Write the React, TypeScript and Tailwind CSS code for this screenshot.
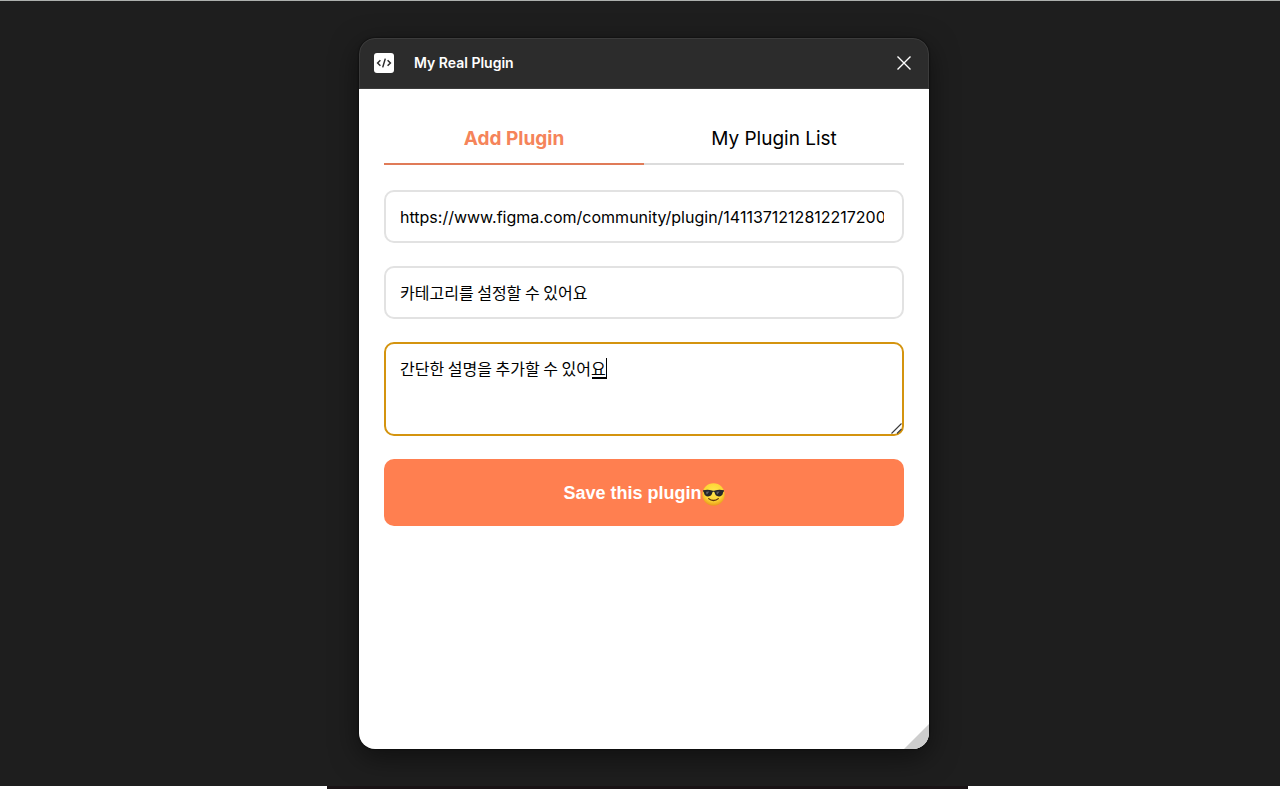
import { useState } from 'react';

type Tab = 'add' | 'list';

const tabs: { id: Tab; label: string }[] = [
    { id: 'add', label: 'Add Plugin' },
    { id: 'list', label: 'My Plugin List' },
];

const fieldStyle =
    'block h-[53px] w-full rounded-[10px] border-2 border-[#e2e2e2] bg-white pl-[14px] text-base text-black outline-none';

const CodeIcon = () => (
    <svg width="20" height="20" viewBox="0 0 20 20" fill="none" aria-hidden="true">
        <rect width="20" height="20" rx="3" fill="#fff" />
        <path
            d="M6.400 7.200 3.600 10l2.800 2.800M13.600 7.200l2.800 2.800-2.800 2.800M11.300 5.600l-2.600 8.800"
            stroke="#2c2c2c"
            strokeWidth="1.500"
        />
    </svg>
);

const CloseIcon = () => (
    <svg width="16" height="16" viewBox="0 0 16 16" fill="none" aria-hidden="true">
        <path d="m1.500 1.500 13 13M14.500 1.500l-13 13" stroke="#fff" strokeWidth="1.400" />
    </svg>
);

const SunglassesFace = () => (
    <svg className="mt-1" width="23" height="23" viewBox="0 0 24 24" fill="none" role="img" aria-label="😎">
        <defs>
            <radialGradient id="face" cx="50%" cy="38%" r="62%">
                <stop offset="0" stopColor="#ffe94f" />
                <stop offset="0.65" stopColor="#fdd535" />
                <stop offset="1" stopColor="#e99a1c" />
            </radialGradient>
        </defs>
        <circle cx="12" cy="12" r="11.7" fill="url(#face)" />
        <path
            d="M1 7.6c3-.9 6.800-.9 9.500.2.900.4 2.100.4 3 0 2.700-1.100 6.500-1.100 9.500-.2l-.3 1.600c-.6.200-.7.700-.9 1.600-.5 2.400-2 3.300-4.300 3.200-2.500-.1-3.700-1.400-4.200-3.500-.2-.9-.5-1.300-1.300-1.300s-1.100.4-1.300 1.300c-.5 2.100-1.700 3.400-4.200 3.500-2.300.1-3.800-.8-4.300-3.200-.2-.9-.3-1.400-.9-1.600L1 7.600Z"
            fill="#26272b"
        />
        <path d="m4.400 9 3.200-.2-2.400 3.300c-.7-.7-.9-2-.8-3.100ZM15.200 9l3.200-.2-2.400 3.300c-.7-.7-.9-2-.8-3.100Z" fill="#62656c" />
        <path d="M7 16.300c2.700 2.600 7.300 2.600 10 0" stroke="#65350c" strokeWidth="1.400" strokeLinecap="round" />
    </svg>
);

const ResizeGrip = () => (
    <svg className="pointer-events-none absolute right-[2px] bottom-[2px]" width="11" height="11" viewBox="0 0 11 11" aria-hidden="true">
        <path d="M.5 10.500l10-10M6 10.500l4.500-4.500" stroke="#3a3a3a" strokeWidth="1.100" />
    </svg>
);

const App = () => {
    const [tab, setTab] = useState<Tab>('add');
    const [url, setUrl] = useState<string>('https://www.figma.com/community/plugin/1411371212812217200');
    const [category, setCategory] = useState<string>('카테고리를 설정할 수 있어요');
    const [description, setDescription] = useState<string>('간단한 설명을 추가할 수 있어요');
    const [isComposing, setIsComposing] = useState<boolean>(true);

    return (
        <div className="flex min-h-screen flex-col border-t border-[#adb0ae] bg-[#1e1e1e] font-['Inter','Noto_Sans_CJK_KR',sans-serif]">
            <main className="flex flex-1 justify-center py-[37px] pr-4 pl-6">
                <section
                    className="relative flex w-full max-w-[570px] flex-col overflow-hidden rounded-2xl bg-[#2c2c2c]
                                shadow-[0_0_2px_rgba(0,0,0,0.9),0_8px_28px_rgba(0,0,0,0.5)]"
                >
                    <header className="flex h-[51px] items-center rounded-t-2xl border border-[#3c3c3c] px-[14px] pb-[2px]">
                        <CodeIcon />
                        <h1 className="ml-5 text-sm font-semibold text-white">My Real Plugin</h1>
                        <button type="button" aria-label="Close" className="ml-auto mr-[2px]">
                            <CloseIcon />
                        </button>
                    </header>

                    <div className="flex-1 bg-white px-[25px] pt-6">
                        <nav className="flex">
                            {tabs.map(({ id, label }) => (
                                <button
                                    key={id}
                                    type="button"
                                    onClick={() => setTab(id)}
                                    className={`flex-1 border-b-2 pt-3 pb-[10px] text-[19px] leading-7
                                                ${tab === id ? 'border-[#e07b58] font-bold text-[#f5845a]' : 'border-[#dcdcdc] text-black'}`}
                                >
                                    {label}
                                </button>
                            ))}
                        </nav>

                        <form className="flex flex-col gap-[23px] py-[25px]" onSubmit={(e) => e.preventDefault()}>
                            <input
                                type="text"
                                aria-label="Plugin URL"
                                value={url}
                                onChange={(e) => setUrl(e.target.value)}
                                className={`${fieldStyle} pr-[18px]`}
                            />
                            <input
                                type="text"
                                aria-label="Category"
                                value={category}
                                onChange={(e) => setCategory(e.target.value)}
                                className={`${fieldStyle} pr-[18px] pb-[2px] font-['Noto_Sans_CJK_KR',sans-serif]`}
                            />
                            <div className="relative">
                                <textarea
                                    aria-label="Description"
                                    value={description}
                                    onChange={(e) => {
                                        setDescription(e.target.value);
                                        setIsComposing(false);
                                    }}
                                    className="block h-[94px] w-full resize-none rounded-[10px] border-2 border-[#d4940f] bg-white
                                                px-[14px] py-3 font-['Noto_Sans_CJK_KR',sans-serif] text-base text-black outline-none"
                                />
                                {/* 조합 중인 글자 밑줄과 커서 */}
                                {isComposing && (
                                    <span className="pointer-events-none absolute top-4 left-52 h-[21px] w-[15px] border-r border-b-2 border-black" />
                                )}
                                <ResizeGrip />
                            </div>
                            <button
                                type="submit"
                                className="flex h-[67px] items-center justify-center rounded-[10px] bg-[#ff7f50]
                                            font-['Liberation_Sans',Arial,sans-serif] text-lg font-bold text-white"
                            >
                                Save this plugin
                                <SunglassesFace />
                            </button>
                        </form>
                    </div>

                    <svg className="absolute right-0 bottom-0" width="25" height="25" viewBox="0 0 25 25" aria-hidden="true">
                        <path d="M25 0v25H0Z" fill="#cdcdcd" />
                    </svg>
                </section>
            </main>

            <div className="grid h-[3px] grid-cols-[327fr_641fr_312fr]">
                <span className="bg-white" />
                <span className="bg-[#1a1416]" />
                <span className="bg-white" />
            </div>
        </div>
    );
};

export default App;
